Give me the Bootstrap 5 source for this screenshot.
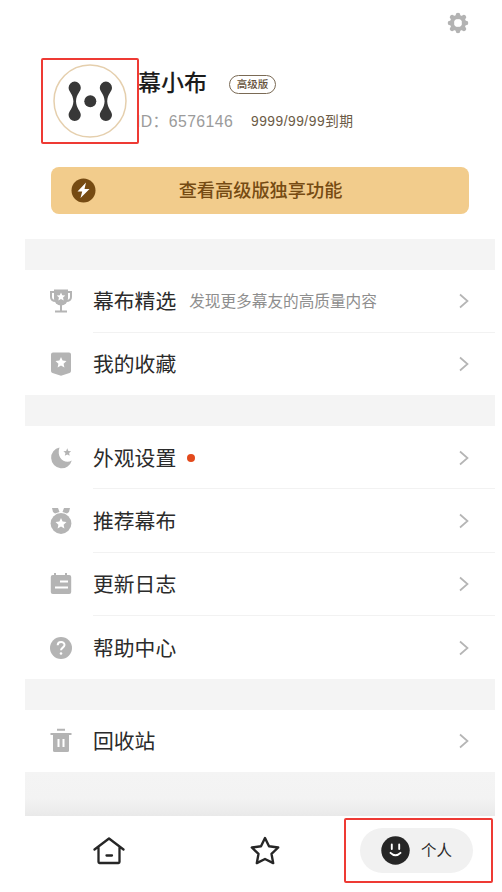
<!DOCTYPE html>
<html lang="zh-CN">
<head>
<meta charset="utf-8">
<meta name="viewport" content="width=device-width, initial-scale=1">
<title>个人</title>
<link href="https://cdn.jsdelivr.net/npm/bootstrap@5.3.0/dist/css/bootstrap.min.css" rel="stylesheet">
<style>
body { font-family: "Liberation Sans", "Noto Sans CJK SC", sans-serif; color: #2b2b2b; background: #fff; overflow: hidden; }
.screen { width: 470px; height: 892px; margin-left: 25px; }
.screen > * { flex-shrink: 0; }
.profile { height: 239px; padding: 0 26px; }
.topbar { height: 46px; }
.user { height: 121px; }
.face-pic { width: 74px; height: 74px; margin: 18px 0 0 2px; }
.user-info { margin-left: 11px; padding-top: 19px; }
.user-name { font-size: 23px; line-height: 36px; color: #1c1c1c; }
.tag { width: 47px; height: 19px; margin: 2px 0 0 22px; border: 1.5px solid #7a6a55; font-size: 10.5px; line-height: 1; color: #65513a; font-weight: 500; }
.id-line { margin-top: 9px; }
.uid { font-size: 15.8px; letter-spacing: .4px; color: #9b9b9b; width: 115px; margin-left: -2px; line-height: 24px; white-space: nowrap; }
.until { font-size: 13.8px; color: #6b5a45; line-height: 24px; letter-spacing: .5px; white-space: nowrap; }
.vip { height: 47px; border-radius: 8px; background: #f2cc8c; color: #764b13; font-size: 18.2px; padding: 0 20px; border: 0; }
.vip-text { font-weight: 500; padding-top: 3px; }
.band { height: 30.5px; background: #f4f4f4; }
.band-last { height: 43.8px; background: linear-gradient(#f4f4f4 0, #f3f3f3 60%, #e9e9e9 100%); }
.item { height: 63.33px; padding-left: 24px; }
.item-one { height: 62.6px; }
.item-icon { width: 24px; height: 26px; color: #b4b4b4; flex: none; }
.item-body { margin-left: 20px; padding-right: 25px; border-bottom: 1.5px solid #f2f2f2; }
.item:last-child .item-body { border-color: transparent; }
.item-title { font-size: 20.8px; line-height: 30px; padding-top: 3px; white-space: nowrap; }
.item-note { font-size: 15.65px; color: #8e8e8e; margin-left: 13px; padding-top: 2px; white-space: nowrap; }
.dot { width: 8px; height: 8px; background: #e34a1c; margin: 1px 0 0 11px; }
.chev { margin-top: 1px; }
.tabs { height: 76px; padding: 12px 0 0 2px; }
.tab-cell { width: 156.5px; height: 45px; }
.tab-me { padding-right: 22px; }
.tab-pill { width: 113px; height: 45px; background: #f1f1f1; font-size: 15.5px; gap: 11px; }
.frame { border: 2px solid #ee3a34; border-radius: 2px; }
.frame-avatar { left: 41px; top: 58px; width: 98px; height: 86px; }
.frame-tab { left: 344px; top: 818px; width: 149px; height: 65px; }
svg { display: block; }
</style>
</head>
<body>
<svg class="d-none" aria-hidden="true">
  <symbol id="chev" viewBox="0 0 12 16"><path d="M2 1.5 9.5 8 2 14.5" fill="none" stroke="#b5b5b5" stroke-width="1.7"/></symbol>
  <symbol id="star" viewBox="0 0 24 24"><path d="M12 1l3.2 7.2 7.8.8-5.8 5.3 1.6 7.7L12 18.1 5.2 22l1.6-7.7L1 9l7.8-.8z"/></symbol>
</svg>

<main class="screen d-flex flex-column">
  <header class="profile">
    <div class="topbar d-flex align-items-center justify-content-end">
      <svg width="22" height="22" viewBox="-11 -11 22 22" fill="#b3b3b3">
        <g stroke="#b3b3b3" stroke-width="4.6" stroke-linecap="round"><path d="M0-8V-6M0 8V6M-8 0H-6M8 0H6M-5.9-5.9-5-5M5.9 5.9 5 5M-5.9 5.9-5 5M5.9-5.9 5-5"/></g>
        <circle r="6" fill="none" stroke="#b3b3b3" stroke-width="4"/>
      </svg>
    </div>
    <div class="user d-flex">
      <svg class="face-pic flex-shrink-0" viewBox="0 0 74 74">
        <circle cx="37" cy="37" r="36" fill="#fff" stroke="#e5cfad" stroke-width="1.5"/>
        <g fill="#383838">
          <circle cx="37.3" cy="37.3" r="6"/>
          <path id="limb" d="M15.6 23.7a6.1 6.1 0 1 1 12.2 0c0 4-4.5 6-4.8 13.6.3 7.6 4.8 9.7 4.8 13.6a6.1 6.1 0 1 1-12.2 0c0-3.9 4.5-6 4.8-13.6-.3-7.6-4.8-9.6-4.8-13.6z"/>
          <use href="#limb" x="31.2"/>
        </g>
      </svg>
      <div class="user-info">
        <div class="d-flex align-items-center"><span class="user-name fw-medium">幕小布</span><span class="tag rounded-pill d-flex align-items-center justify-content-center">高级版</span></div>
        <div class="id-line d-flex align-items-center"><span class="uid">ID：6576146</span><span class="until">9999/99/99到期</span></div>
      </div>
    </div>
    <button type="button" class="vip d-flex align-items-center w-100">
      <svg width="25" height="25" viewBox="0 0 25 25"><circle cx="12.5" cy="12.5" r="12" fill="#764b13"/><path d="M15 4.500 6.500 13.500h4.700l-1.700 6.500L18.500 11h-5z" fill="#fff"/></svg>
      <span class="vip-text flex-grow-1 text-center">查看高级版独享功能</span><span class="ps-4"></span>
    </button>
  </header>

  <div class="band"></div>
  <section>
    <div class="item d-flex align-items-center">
      <svg class="item-icon" viewBox="0 0 24 26"><path d="M5 1.500h14v9a7 7 0 0 1-14 0z" fill="currentColor"/><path d="M6 4H2v5q0 4 5 4M18 4h4v5q0 4-5 4M12 15v8M6 23.500h12" fill="none" stroke="currentColor" stroke-width="2"/><use href="#star" x="7.300" y="4" width="9.400" height="9.400" fill="#fff"/></svg>
      <div class="item-body d-flex align-items-center flex-grow-1 h-100"><span class="item-title">幕布精选</span><span class="item-note">发现更多幕友的高质量内容</span><svg class="chev ms-auto" width="12" height="16"><use href="#chev"/></svg></div>
    </div>
    <div class="item item-one d-flex align-items-center">
      <svg class="item-icon" viewBox="0 0 24 26"><path d="M4 1.500h16a2 2 0 0 1 2 2V20q0 1.500-1.500 2L12 24.800 3.500 22Q2 21.500 2 20V3.500a2 2 0 0 1 2-2z" fill="currentColor"/><use href="#star" x="6" y="5.500" width="12" height="12" fill="#fff"/></svg>
      <div class="item-body d-flex align-items-center flex-grow-1 h-100"><span class="item-title">我的收藏</span><svg class="chev ms-auto" width="12" height="16"><use href="#chev"/></svg></div>
    </div>
  </section>

  <div class="band"></div>
  <section>
    <div class="item d-flex align-items-center">
      <svg class="item-icon" viewBox="0 0 24 26"><path d="M10.500 2.500A10.500 10.500 0 1 0 22.800 15.500C16 19.500 7 13 10.500 2.500z" fill="currentColor"/><use href="#star" x="14" y="3" width="8.500" height="8.500" fill="currentColor"/></svg>
      <div class="item-body d-flex align-items-center flex-grow-1 h-100"><span class="item-title">外观设置</span><span class="dot rounded-circle"></span><svg class="chev ms-auto" width="12" height="16"><use href="#chev"/></svg></div>
    </div>
    <div class="item d-flex align-items-center">
      <svg class="item-icon" viewBox="0 0 24 26"><path d="M3 0h6l1.500 4L6 5.500 4 4zM21 0h-6l-1.500 4L18 5.500 20 4z" fill="currentColor"/><circle cx="12" cy="15.500" r="10.400" fill="currentColor"/><use href="#star" x="6" y="9.500" width="12" height="12" fill="#fff"/></svg>
      <div class="item-body d-flex align-items-center flex-grow-1 h-100"><span class="item-title">推荐幕布</span><svg class="chev ms-auto" width="12" height="16"><use href="#chev"/></svg></div>
    </div>
    <div class="item d-flex align-items-center">
      <svg class="item-icon" viewBox="0 0 24 26"><rect x="1.800" y="4" width="20.400" height="19" rx="2" fill="currentColor"/><path d="M6 2v3M17 2v3" stroke="currentColor" stroke-width="2"/><path d="M11 10.500h8M6 16.500h13" stroke="#fff" stroke-width="2"/></svg>
      <div class="item-body d-flex align-items-center flex-grow-1 h-100"><span class="item-title">更新日志</span><svg class="chev ms-auto" width="12" height="16"><use href="#chev"/></svg></div>
    </div>
    <div class="item d-flex align-items-center">
      <svg class="item-icon" viewBox="0 0 24 26"><circle cx="12" cy="13" r="11" fill="currentColor"/><path d="M8.700 10.300c0-4.300 6.800-4.200 6.800-.3 0 2.600-3.500 2.700-3.500 5.300" fill="none" stroke="#fff" stroke-width="2"/><circle cx="12" cy="18.500" r="1.300" fill="#fff"/></svg>
      <div class="item-body d-flex align-items-center flex-grow-1 h-100"><span class="item-title">帮助中心</span><svg class="chev ms-auto" width="12" height="16"><use href="#chev"/></svg></div>
    </div>
  </section>

  <div class="band"></div>
  <section>
    <div class="item item-one d-flex align-items-center">
      <svg class="item-icon" viewBox="0 0 24 26"><path d="M8 1.800h8M1.500 6h21" stroke="currentColor" stroke-width="2"/><path d="M4 6h16v16.500a1.500 1.500 0 0 1-1.500 1.500h-13A1.500 1.500 0 0 1 4 22.500z" fill="currentColor"/><path d="M9.500 11v8M14.500 11v8" stroke="#fff" stroke-width="2"/></svg>
      <div class="item-body d-flex align-items-center flex-grow-1 h-100"><span class="item-title">回收站</span><svg class="chev ms-auto" width="12" height="16"><use href="#chev"/></svg></div>
    </div>
  </section>
  <div class="band-last"></div>

  <nav class="tabs d-flex">
    <a href="#" class="tab-cell d-flex align-items-center justify-content-center ps-2 text-reset" aria-label="主页"><svg width="32" height="30" viewBox="0 0 32 30" fill="none" stroke="#262626" stroke-width="2.3" stroke-linecap="round" stroke-linejoin="round"><path d="M1.500 13.500 16 2.500l14.500 11M5.500 11.500V26q0 1 1 1h19q1 0 1-1V11.500M13.500 19.500h5.500"/></svg></a>
    <a href="#" class="tab-cell d-flex align-items-center justify-content-center ps-2 text-reset" aria-label="收藏"><svg width="30" height="30" viewBox="0 0 30 30" fill="none" stroke="#262626" stroke-width="2.4" stroke-linejoin="round"><path d="M15 2l4 8.300 9.200 1.200-6.700 6.400 1.700 9.200L15 23l-8.200 4.100 1.700-9.200-6.700-6.400L11 10.300z"/></svg></a>
    <a href="#" class="tab-cell tab-me d-flex justify-content-end text-reset text-decoration-none"><span class="tab-pill rounded-pill d-flex align-items-center justify-content-center flex-shrink-0"><svg width="29" height="29" viewBox="0 0 29 29"><circle cx="14.5" cy="14.5" r="14.2" fill="#262626"/><path d="M10.800 8.500v4.500M18.200 8.500v4.500M9.500 16.800q5 5 10 0" fill="none" stroke="#fff" stroke-width="1.9" stroke-linecap="round"/></svg>个人</span></a>
  </nav>
</main>
<div class="frame frame-avatar position-absolute"></div>
<div class="frame frame-tab position-absolute"></div>
<script src="https://cdn.jsdelivr.net/npm/bootstrap@5.3.0/dist/js/bootstrap.bundle.min.js"></script>
</body>
</html>
